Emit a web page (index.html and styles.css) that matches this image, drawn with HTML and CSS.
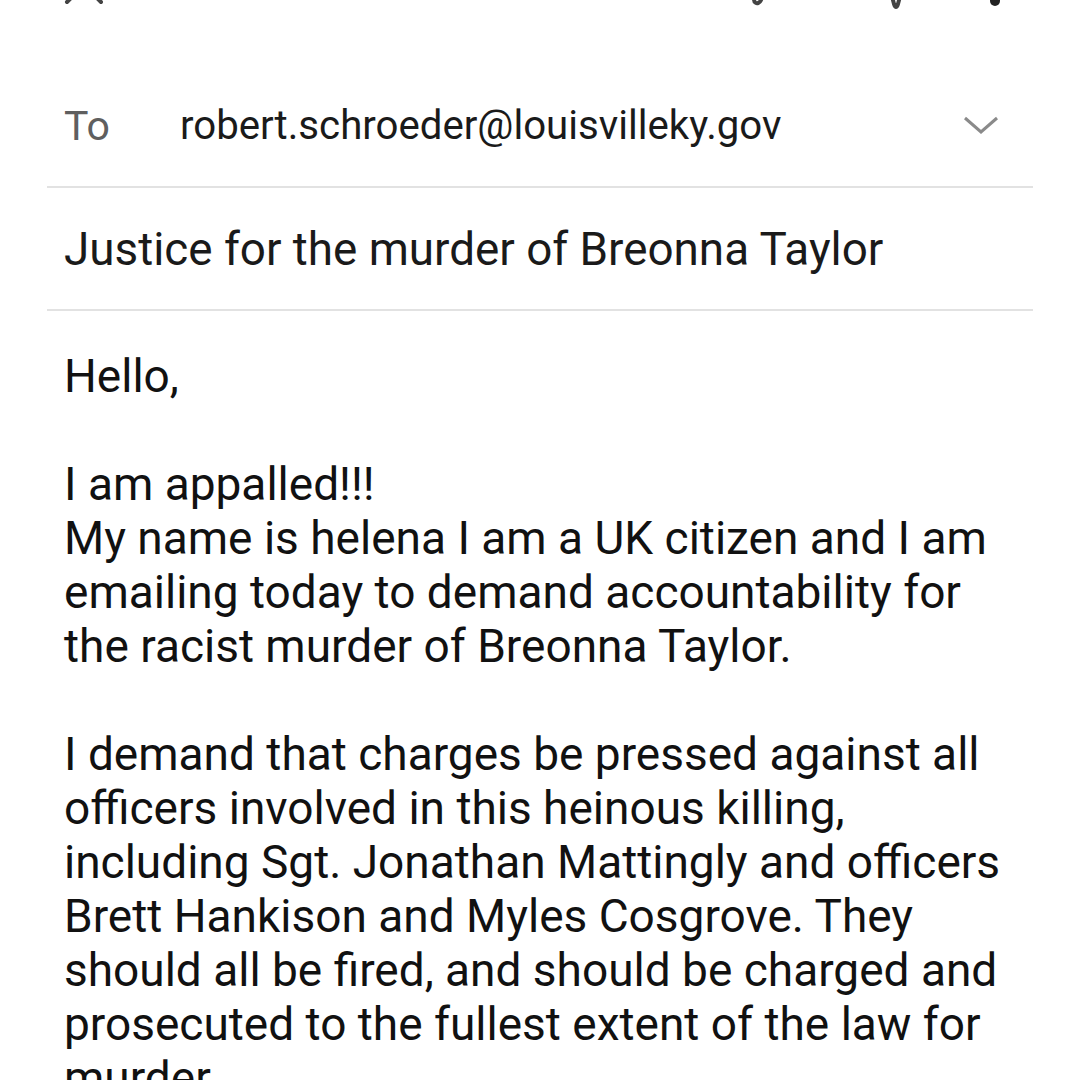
FILE: index.html
```html
<!DOCTYPE html>
<html>
<head>
<meta charset="utf-8">
<link rel="stylesheet" href="styles.css">
</head>
<body>
<div class="screen">
  <div class="appbar">
    <svg class="icon-close" width="40" height="40" viewBox="0 0 40 40"><path d="M3 3 L37 37 M37 3 L3 37" stroke="#444" stroke-width="4" stroke-linecap="round" fill="none"/></svg>
    <svg class="icon-clip" width="32" height="60" viewBox="0 0 32 60"><path d="M28 8 L10 46 C7 53 13 56 16 50 L30 20" stroke="#444" stroke-width="4" stroke-linecap="round" stroke-linejoin="round" fill="none"/></svg>
    <svg class="icon-send" width="32" height="50" viewBox="0 0 32 50"><path d="M4 6 L28 6 L18 44 Q16 50 14 44 Z" stroke="#444" stroke-width="4" stroke-linejoin="round" fill="none"/></svg>
    <svg class="icon-more" width="20" height="40" viewBox="0 0 20 40"><circle cx="10" cy="5" r="5" fill="#222"/><circle cx="10" cy="19" r="5" fill="#222"/><circle cx="10" cy="33" r="5" fill="#222"/></svg>
  </div>

  <div class="field field-to">
    <span class="label">To</span>
    <span class="recipient">robert.schroeder@louisvilleky.gov</span>
    <svg class="chevron" width="40" height="20" viewBox="0 0 40 20"><path d="M3 3 L19 17 L35 3" stroke="#8a8a8a" stroke-width="3" fill="none"/></svg>
  </div>

  <div class="field field-subject">
    <span class="subject">Justice for the murder of Breonna Taylor</span>
  </div>

  <div class="body">
    <p>Hello,</p>
    <p>I am appalled!!!<br>My name is helena I am a UK citizen and I am<br>emailing today to demand accountability for<br>the racist murder of Breonna Taylor.</p>
    <p>I demand that charges be pressed against all<br>officers involved in this heinous killing,<br>including Sgt. Jonathan Mattingly and officers<br>Brett Hankison and Myles Cosgrove. They<br>should all be fired, and should be charged and<br>prosecuted to the fullest extent of the law for<br>murder.</p>
  </div>
</div>
</body>
</html>
```

FILE: styles.css
```css
html, body {
  margin: 0;
  padding: 0;
  background: #ffffff;
}

.screen {
  width: 1080px;
  height: 1080px;
  overflow: hidden;
  font-family: Roboto, "Noto Sans", sans-serif;
  color: #111111;
}

.appbar {
  height: 64px;
  margin-top: -54px;
  display: flex;
  align-items: flex-end;
  padding-left: 64px;
}

.icon-close { margin-bottom: 5px; }
.icon-clip { margin-left: 641px; }
.icon-send { margin-left: 103px; }
.icon-more { margin-left: 73px; margin-bottom: 2px; }

.field {
  margin: 0 47px;
  padding-left: 17px;
  border-bottom: 2px solid #e2e2e2;
  display: flex;
  align-items: flex-start;
}

.field-to {
  padding-top: 92px;
  padding-bottom: 36px;
  font-size: 41px;
  line-height: 48px;
}

.label {
  width: 116px;
  color: #5f5f5f;
}

.recipient {
  color: #1a1a1a;
  font-size: 40.2px;
}

.chevron {
  margin-left: auto;
  margin-right: 31px;
  margin-top: 13px;
}

.field-subject {
  padding-top: 35px;
  padding-bottom: 33px;
  font-size: 45.8px;
  line-height: 53px;
}

.subject { color: #1a1a1a; }

.body {
  padding: 38px 0 0 64px;
  font-size: 46px;
  line-height: 54px;
  white-space: nowrap;
}

.body p {
  margin: 0 0 54px 0;
}
```
